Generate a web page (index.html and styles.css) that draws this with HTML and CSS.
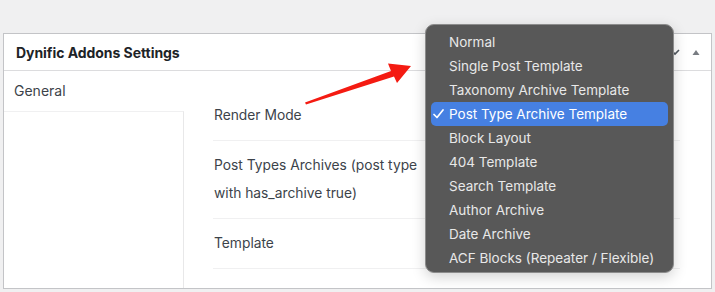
FILE: index.html
```html
<!DOCTYPE html>
<html>
<head>
<meta charset="utf-8">
<link rel="stylesheet" href="styles.css">
</head>
<body>
<div class="page">
  <div class="postbox">
    <div class="postbox-header">
      <h2 class="title">Dynific Addons Settings</h2>
      <div class="handles">
        <svg class="h-icon" width="12" height="12" viewBox="0 0 12 12"><path d="M2 4 L6 8 L10 4" fill="none" stroke="#50575e" stroke-width="1.6"/></svg>
        <svg class="h-icon" width="10" height="8" viewBox="0 0 10 8"><path d="M1.5 7 L5 2 L8.5 7 Z" fill="#787c82"/></svg>
      </div>
    </div>
    <div class="inside">
      <div class="nav">
        <div class="nav-item">General</div>
        <div class="nav-fill"></div>
      </div>
      <div class="content">
        <div class="row"><div class="label">Render Mode</div></div>
        <div class="row"><div class="label">Post Types Archives (post type<br>with has_archive true)</div></div>
        <div class="row"><div class="label">Template</div></div>
      </div>
    </div>
  </div>

  <svg class="arrow" width="715" height="292" viewBox="0 0 715 292">
    <polygon points="305,102.5 391,71 388,63.5 411,66 397,83 394,76.5 306,104.5" fill="#f41b12"/>
  </svg>

  <div class="menu">
    <div class="opt">Normal</div>
    <div class="opt">Single Post Template</div>
    <div class="opt">Taxonomy Archive Template</div>
    <div class="opt selected"><svg class="check" width="11" height="10" viewBox="0 0 11 10"><path d="M1 5.5 L4 8.5 L10 1" fill="none" stroke="#fff" stroke-width="1.7" stroke-linecap="round" stroke-linejoin="round"/></svg>Post Type Archive Template</div>
    <div class="opt">Block Layout</div>
    <div class="opt">404 Template</div>
    <div class="opt">Search Template</div>
    <div class="opt">Author Archive</div>
    <div class="opt">Date Archive</div>
    <div class="opt">ACF Blocks (Repeater / Flexible)</div>
  </div>
</div>
</body>
</html>
```

FILE: styles.css
```css
html, body {
  margin: 0;
  padding: 0;
}
body {
  background: #f0f0f1;
  font-family: "Inter", "Liberation Sans", sans-serif;
  color: #3c434a;
  width: 715px;
  height: 292px;
  overflow: hidden;
}
.page {
  position: relative;
  padding: 33px 3px 0 3px;
  height: 292px;
  box-sizing: border-box;
}
.postbox {
  background: #fff;
  border: 1px solid #c3c4c7;
  height: 256px;
  box-sizing: border-box;
  display: flex;
  flex-direction: column;
}
.postbox-header {
  height: 36px;
  border-bottom: 1px solid #dcdcde;
  display: flex;
  align-items: center;
  justify-content: space-between;
  padding: 0 10px 0 12px;
  flex: none;
}
.title {
  margin: 0;
  font-size: 14px;
  font-weight: 700;
  color: #1d2327;
  letter-spacing: -0.05px;
}
.handles {
  display: flex;
  align-items: center;
  gap: 10px;
}
.inside {
  flex: 1;
  display: grid;
  grid-template-columns: 180px 1fr;
}
.nav {
  display: flex;
  flex-direction: column;
}
.nav-item {
  height: 40px;
  line-height: 40px;
  padding-left: 10px;
  font-size: 14px;
  color: #3c434a;
}
.nav-fill {
  flex: 1;
  border-top: 1px solid #f0f0f1;
  border-right: 1px solid #e8e8e9;
}
.content {
  padding: 20px 31px 0 29px;
}
.row {
  border-bottom: 1px solid #f0f0f1;
  padding: 10px 0 11px 1px;
}
.label {
  font-size: 13.8px;
  line-height: 28px;
  color: #3c434a;
}
.arrow {
  position: absolute;
  left: 0;
  top: 0;
  pointer-events: none;
}
.menu {
  position: absolute;
  left: 425px;
  top: 24px;
  width: 249px;
  height: 249px;
  box-sizing: border-box;
  background: #585858;
  border: 1px solid #8c8c8c;
  border-radius: 9px;
  padding: 5px 5px 2px 5px;
  box-shadow: 0 4px 14px rgba(0, 0, 0, 0.18);
}
.opt {
  height: 24px;
  line-height: 24px;
  padding-left: 18px;
  font-size: 13.5px;
  color: #e8e8e8;
  border-radius: 5px;
  position: relative;
  white-space: nowrap;
}
.opt.selected {
  background: #4680e2;
  color: #fff;
}
.check {
  position: absolute;
  left: 2px;
  top: 7px;
}
```
